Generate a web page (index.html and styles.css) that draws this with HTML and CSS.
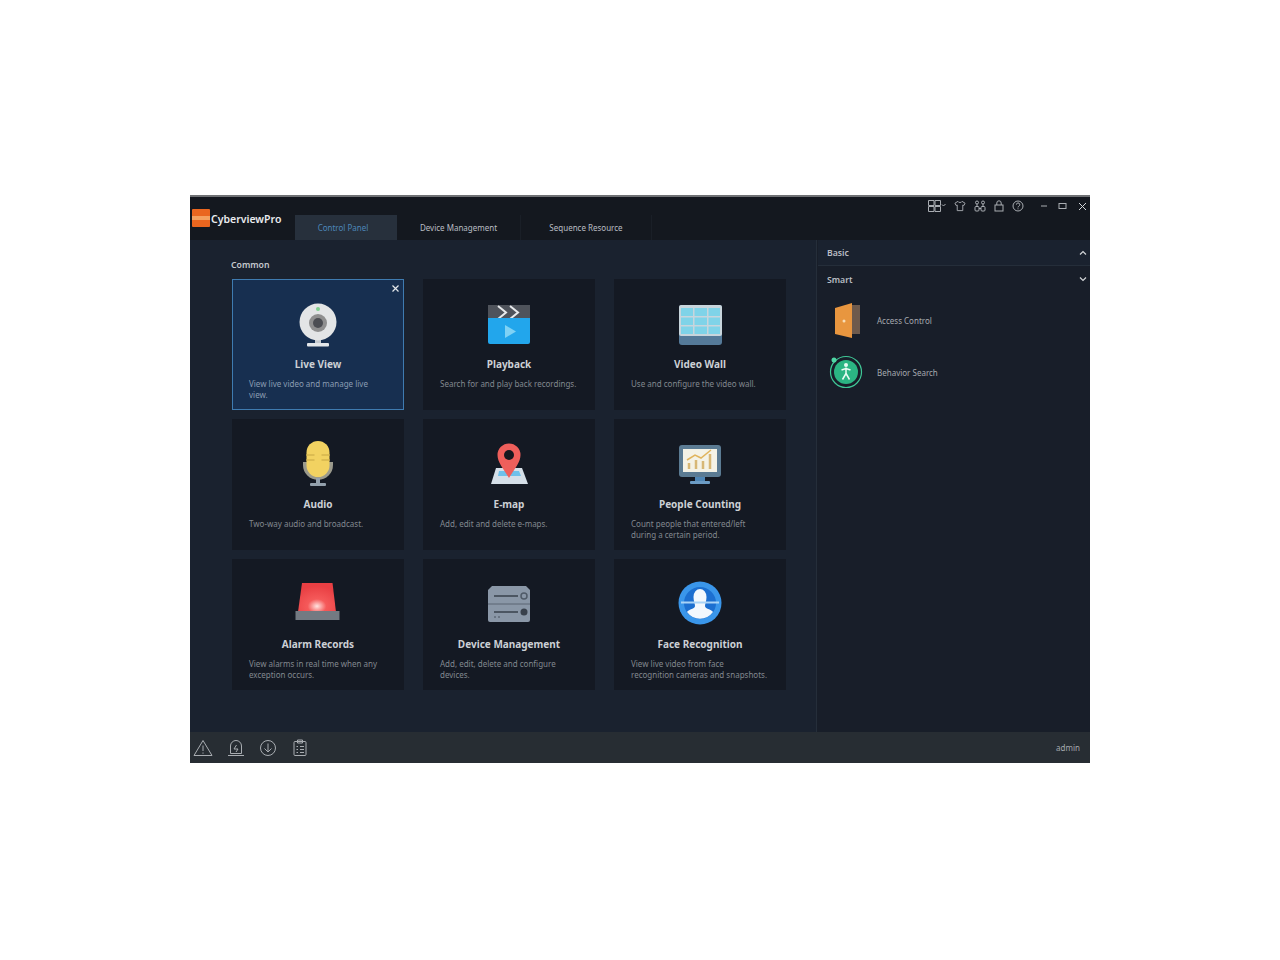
FILE: index.html
```html
<!DOCTYPE html>
<html lang="en">
<head>
    <meta charset="UTF-8">
    <title>CyberviewPro</title>
    <link rel="stylesheet" href="styles.css">
</head>
<body>
    <div class="app">
        <!-- Title bar -->
        <header class="titlebar">
            <div class="brand">
                <div class="logo"><span></span></div>
                <span class="brand-name">CyberviewPro</span>
            </div>
            <nav class="tabs">
                <div class="tab active">Control Panel</div>
                <div class="tab device">Device Management</div>
                <div class="tab sequence">Sequence Resource</div>
            </nav>
            <div class="win-tools">
                <svg width="18" height="12" viewBox="0 0 18 12"><path d="M.5.500h5.500v5H.5zM7 .5h5.500v5H7zM.5 6.500h5.500v5H.5zM7 6.500h5.500v5H7zM14 4.500l1.500 1.500L17.500 4"/></svg>
                <svg width="12" height="12" viewBox="0 0 13 12"><path d="M4.200 1L1 3l1.200 2.400L3.500 5v6h6V5l1.300.4L12 3 8.800 1c-.5 1.600-4.100 1.600-4.600 0z"/></svg>
                <svg width="12" height="12" viewBox="0 0 12 12"><circle cx="3" cy="2.500" r="1.500"/><circle cx="9" cy="2.500" r="1.500"/><rect x="1" y="6.500" width="4" height="4.500" rx="1"/><rect x="7" y="6.500" width="4" height="4.500" rx="1"/><path d="M5 8.500h2M3 4v2.500M9 4v2.500"/></svg>
                <svg width="10" height="12" viewBox="0 0 10 12"><rect x="1" y="5" width="8" height="6"/><path d="M2.800 5V3a2.200 2.200 0 0 1 4.400 0v2"/></svg>
                <svg width="12" height="12" viewBox="0 0 12 12"><circle cx="6" cy="6" r="5"/><path d="M4.400 4.600a1.700 1.700 0 1 1 2.400 1.600c-.6.300-.8.600-.8 1.200M6 8.400v.9"/></svg>
                <svg class="minimize" width="8" height="8" viewBox="0 0 8 8"><path d="M1 4h6"/></svg>
                <svg class="maximize" width="9" height="8" viewBox="0 0 9 8"><rect x="1" y="1.500" width="7" height="5"/></svg>
                <svg class="close" width="9" height="9" viewBox="0 0 9 9"><path d="M1 1l7 7M8 1L1 8"/></svg>
            </div>
        </header>

        <div class="content">
            <!-- Common modules -->
            <main class="common">
                <h2 class="section-title">Common</h2>
                <div class="cards">
                    <div class="card selected">
                        <svg class="card-close" width="7" height="7" viewBox="0 0 7 7"><path d="M.5.500l6 6M6.500.500l-6 6"/></svg>
                        <svg class="card-icon" width="48" height="48" viewBox="0 0 48 48">
                            <path d="M21 38h6v6h-6z" fill="#c5cad0"/>
                            <rect x="13" y="43" width="22" height="3.500" rx="1" fill="#e4e7ea"/>
                            <circle cx="24" cy="22" r="18.500" fill="#e3e5e6"/>
                            <circle cx="24" cy="23" r="9" fill="#8f8f8f"/>
                            <circle cx="24" cy="23" r="5" fill="#4b4d52"/>
                            <circle cx="24" cy="9" r="2" fill="#7fd08f"/>
                        </svg>
                        <h3>Live View</h3>
                        <p>View live video and manage live view.</p>
                    </div>
                    <div class="card">
                        <svg class="card-icon" width="48" height="48" viewBox="0 0 48 48">
                            <rect x="3" y="5" width="42" height="13" fill="#4f535b"/>
                            <path d="M13 6l8 6.500-8 6.500M25 6l8 6.500-8 6.500" fill="none" stroke="#e8eaec" stroke-width="2"/>
                            <path d="M3 18h42v24a2 2 0 0 1-2 2H5a2 2 0 0 1-2-2z" fill="#22a6ec"/>
                            <path d="M20 25l11 6.500-11 6.500z" fill="#7fd2f5"/>
                        </svg>
                        <h3>Playback</h3>
                        <p>Search for and play back recordings.</p>
                    </div>
                    <div class="card">
                        <svg class="card-icon" width="48" height="48" viewBox="0 0 48 48">
                            <rect x="3" y="5" width="43" height="40" rx="3" fill="#557a99"/>
                            <rect x="3" y="5" width="43" height="31" rx="2" fill="#c8d5dc"/>
                            <path d="M5 8h12v8H5zM18.500 8h12.500v8H18.500zM32.500 8H44v8H32.500zM5 17.500h12V25H5zM18.500 17.500h12.500V25H18.500zM32.500 17.500H44V25H32.500zM5 26.500h12V34H5zM18.500 26.500h12.500V34H18.500zM32.500 26.500H44V34H32.500z" fill="#7fd3e8"/>
                        </svg>
                        <h3>Video Wall</h3>
                        <p>Use and configure the video wall.</p>
                    </div>
                    <div class="card">
                        <svg class="card-icon" width="48" height="48" viewBox="0 0 48 48">
                            <path d="M9 22v3a15 15 0 0 0 30 0v-3z" fill="#9b9a8c"/>
                            <rect x="22" y="38" width="4" height="6" fill="#93a0ac"/>
                            <rect x="16" y="43" width="16" height="3" rx="1" fill="#93a0ac"/>
                            <rect x="12.500" y="1" width="23" height="36" rx="11.500" fill="#f2d261"/>
                            <path d="M12.500 14h8v2h-8zM12.500 19h8v2h-8zM27.500 14h8v2h-8zM27.500 19h8v2h-8z" fill="#dcbc52"/>
                        </svg>
                        <h3>Audio</h3>
                        <p>Two-way audio and broadcast.</p>
                    </div>
                    <div class="card">
                        <svg class="card-icon" width="48" height="48" viewBox="0 0 48 48">
                            <path d="M11 28h26l6 16H6z" fill="#d5dfe8"/>
                            <path d="M14 31h20l2 5H13z" fill="#6ec0ea"/>
                            <path d="M24 38C18 28 12.500 22 12.500 15a11.500 11.500 0 0 1 23 0c0 7-5.500 13-11.500 23z" fill="#ee5f5b"/>
                            <circle cx="24" cy="15" r="5" fill="#14181f"/>
                        </svg>
                        <h3>E-map</h3>
                        <p>Add, edit and delete e-maps.</p>
                    </div>
                    <div class="card">
                        <svg class="card-icon" width="48" height="48" viewBox="0 0 48 48">
                            <rect x="19" y="36" width="10" height="6" fill="#4f86b5"/>
                            <rect x="14" y="41" width="20" height="3" rx="1" fill="#6c9cc5"/>
                            <rect x="3" y="5" width="42" height="32" rx="3" fill="#5b7b93"/>
                            <rect x="7" y="9" width="34" height="23" fill="#f4f2e6"/>
                            <path d="M13 29v-6M20 29v-9M27 29v-8M34 29V14" stroke="#d7b775" stroke-width="2.500"/>
                            <path d="M11 20l8-5 6 3 10-8" fill="none" stroke="#e0b45c" stroke-width="1.500"/>
                        </svg>
                        <h3>People Counting</h3>
                        <p>Count people that entered/left during a certain period.</p>
                    </div>
                    <div class="card">
                        <svg class="card-icon" width="48" height="48" viewBox="0 0 48 48">
                            <defs>
                                <radialGradient id="siren" cx="0.500" cy="0.800" r="0.700">
                                    <stop offset="0" stop-color="#ffe3e0"/>
                                    <stop offset="0.350" stop-color="#f55a5a"/>
                                    <stop offset="1" stop-color="#e93f43"/>
                                </radialGradient>
                            </defs>
                            <path d="M8 3h30.500L42 32H4z" fill="url(#siren)"/>
                            <rect x="1.500" y="31" width="44" height="9" fill="#737a82"/>
                        </svg>
                        <h3>Alarm Records</h3>
                        <p>View alarms in real time when any exception occurs.</p>
                    </div>
                    <div class="card">
                        <svg class="card-icon" width="48" height="48" viewBox="0 0 48 48">
                            <path d="M7 6h34l4 4v30a2 2 0 0 1-2 2H5a2 2 0 0 1-2-2V10z" fill="#8a97a7"/>
                            <path d="M3 24h42" stroke="#5a6572" stroke-width="1"/>
                            <path d="M9 16h24M9 32h24" stroke="#39414c" stroke-width="1.500"/>
                            <circle cx="39" cy="16" r="3" fill="none" stroke="#505b68" stroke-width="1.500"/>
                            <circle cx="39" cy="32" r="3.500" fill="#39414c"/>
                            <path d="M9 37h2M13 37h2" stroke="#48525e"/>
                        </svg>
                        <h3>Device Management</h3>
                        <p>Add, edit, delete and configure devices.</p>
                    </div>
                    <div class="card">
                        <svg class="card-icon" width="48" height="48" viewBox="0 0 48 48">
                            <circle cx="24" cy="23" r="21.500" fill="#3a96ea"/>
                            <circle cx="24" cy="23" r="16" fill="#1c6fd0"/>
                            <path d="M17.500 17a6.500 8 0 0 1 13 0c0 4-1.500 7-1.500 9 0 3 6 3 8 6a16 16 0 0 1-26 0c2-3 8-3 8-6 0-2-1.500-5-1.500-9z" fill="#f3f8fd"/>
                            <path d="M5 21.500h38v2H5z" fill="#a9d3f6"/>
                        </svg>
                        <h3>Face Recognition</h3>
                        <p>View live video from face recognition cameras and snapshots.</p>
                    </div>
                </div>
            </main>

            <!-- Side panel -->
            <aside class="side">
                <div class="side-head basic">
                    <span>Basic</span>
                    <svg class="chev" width="8" height="6" viewBox="0 0 8 6"><path d="M1 4.500L4 1.500l3 3"/></svg>
                </div>
                <div class="side-head smart">
                    <span>Smart</span>
                    <svg class="chev" width="8" height="6" viewBox="0 0 8 6"><path d="M1 1.500L4 4.500l3-3"/></svg>
                </div>
                <div class="side-list">
                    <div class="side-item">
                        <svg width="34" height="36" viewBox="0 0 34 36">
                            <path d="M16 3h15v29H16z" fill="#6e5a4c"/>
                            <path d="M6 6l17-5v35L6 32z" fill="#e8963f"/>
                            <circle cx="15" cy="19" r="1.500" fill="#f8ddb5"/>
                        </svg>
                        <span>Access Control</span>
                    </div>
                    <div class="side-item">
                        <svg width="34" height="34" viewBox="0 0 34 34">
                            <circle cx="17" cy="17" r="15.500" fill="none" stroke="#3fc796" stroke-width="1.200"/>
                            <circle cx="17" cy="17" r="12" fill="#2bb583"/>
                            <circle cx="5" cy="5" r="2.500" fill="#4fd6a4"/>
                            <circle cx="17" cy="10" r="2" fill="#e9fbf4"/>
                            <path d="M17 12.500v6M12.500 15l4.500-1.500 4.500 1.500M17 18.500l-3.500 6M17 18.500l3.500 6" fill="none" stroke="#e9fbf4" stroke-width="1.500"/>
                        </svg>
                        <span>Behavior Search</span>
                    </div>
                </div>
            </aside>
        </div>

        <!-- Status bar -->
        <footer class="statusbar">
            <div class="status-icons">
                <svg width="20" height="18" viewBox="0 0 20 18"><path d="M10 1.500L19 16.500H1z"/><path d="M10 6.500v5.500M10 13.500v1.200"/></svg>
                <svg width="18" height="18" viewBox="0 0 18 18"><path d="M3.500 14.500V7a5.500 5.500 0 0 1 11 0v7.500zM1 16.500h16"/><path d="M9.500 6L7 10h4l-2 3"/></svg>
                <svg width="18" height="18" viewBox="0 0 18 18"><circle cx="9" cy="9" r="7.500"/><path d="M9 4.500v8.500M5.500 9.500L9 13l3.500-3.500"/></svg>
                <svg class="clipboard" width="16" height="18" viewBox="0 0 16 18"><rect x="2" y="2.500" width="12" height="14" rx="1"/><path d="M5.500 1h5v3h-5zM4.500 7.500h1.500M8 7.500h4M4.500 10.500h1.500M8 10.500h4M4.500 13.500h1.500M8 13.500h4"/></svg>
            </div>
            <span class="user">admin</span>
        </footer>
    </div>
</body>
</html>
```

FILE: styles.css
```css
/* Reset default styles */
* {
    margin: 0;
    padding: 0;
    box-sizing: border-box;
}

body {
    font-family: "Noto Sans", "Open Sans", sans-serif;
    background: #ffffff;
    padding: 195px 0 0 190px;
}

.app {
    display: flex;
    flex-direction: column;
    width: 900px;
    height: 568px;
    background: #1a222f;
    color: #c4c8cd;
}

/* Title bar */
.titlebar {
    display: flex;
    align-items: flex-start;
    height: 45px;
    background: #14181f;
    border-top: 2px solid #6f7174;
}

.brand {
    display: flex;
    align-items: center;
    gap: 1px;
    width: 103px;
    margin: 12px 0 0 2px;
}

.logo {
    display: flex;
    align-items: center;
    width: 18px;
    height: 18px;
    border-radius: 1px;
    background: #ea661f;
}

.logo span {
    display: block;
    width: 100%;
    height: 4px;
    background: #f5a15f;
}

.brand-name {
    font-size: 10.500px;
    font-weight: 600;
    padding-top: 2px;
    color: #e9ebee;
}

.tabs {
    display: flex;
    margin-top: 18px;
}

.tab {
    display: flex;
    align-items: center;
    justify-content: center;
    height: 25px;
    font-size: 8px;
    color: #b9bdc3;
}

.tab.active {
    width: 102px;
    padding-right: 6px;
    background: #27303c;
    color: #4c86b9;
}

.tab.device {
    width: 124px;
    border-right: 1px solid #1a1f27;
}

.tab.sequence {
    width: 131px;
    border-right: 1px solid #1a1f27;
}

.win-tools {
    display: flex;
    align-items: center;
    gap: 8px;
    margin: 3px 3px 0 auto;
}

.win-tools svg {
    fill: none;
    stroke: #a9adb2;
    stroke-width: 1;
}

.win-tools .minimize {
    margin-left: 8px;
}

.win-tools .maximize {
    margin-left: 2px;
}

.win-tools .close {
    margin-left: 3px;
    stroke: #d3d6d9;
}

/* Main area */
.content {
    flex: 1;
    display: flex;
    min-height: 0;
}

.common {
    width: 627px;
    padding: 19px 0 0 41px;
    border-right: 1px solid #252e3a;
}

.section-title {
    font-size: 8.700px;
    font-weight: 600;
    line-height: 12px;
    color: #c4c8cd;
    margin-bottom: 8px;
}

.cards {
    display: grid;
    grid-template-columns: repeat(3, 172px);
    grid-auto-rows: 131px;
    gap: 9px 19px;
    margin-left: 1px;
}

.card {
    position: relative;
    display: flex;
    flex-direction: column;
    align-items: center;
    padding: 21px 17px 0;
    background: #141923;
}

.card.selected {
    background: #172f50;
    border: 1px solid #3f7bb0;
    padding: 20px 16px 0;
}

.card-close {
    position: absolute;
    top: 5px;
    right: 4px;
    fill: none;
    stroke: #e4e7ea;
    stroke-width: 1.2;
}

.card-icon {
    flex: none;
}

.card h3 {
    font-size: 10px;
    font-weight: 700;
    line-height: 14px;
    margin-top: 9px;
    color: #ccd0d5;
}

.card p {
    align-self: flex-start;
    max-width: 137px;
    font-size: 8px;
    line-height: 10.500px;
    margin-top: 8px;
    color: #82888f;
}

.card.selected p {
    color: #8a9cb2;
}

/* Side panel */
.side {
    flex: 1;
    background: #181e29;
    padding-left: 1px;
}

.side-head {
    display: flex;
    align-items: center;
    justify-content: space-between;
    height: 26px;
    padding: 0 3px 0 9px;
    font-size: 8.700px;
    font-weight: 600;
    color: #b9bdc3;
}

.side-head.basic {
    background: #1a222f;
    border-bottom: 1px solid #252e3a;
}

.side-head.smart span {
    margin-top: 2px;
}

.chev {
    fill: none;
    stroke: #d3d6d9;
    stroke-width: 1.200;
}

.side-list {
    padding-top: 2px;
}

.side-item {
    display: flex;
    align-items: center;
    gap: 14px;
    height: 52px;
    padding-left: 11px;
    font-size: 8px;
    color: #a5a9af;
}

/* Status bar */
.statusbar {
    display: flex;
    align-items: center;
    justify-content: space-between;
    height: 31px;
    flex: none;
    background: #272d33;
    padding: 0 10px 0 3px;
}

.status-icons {
    display: flex;
    align-items: center;
    gap: 14px;
}

.status-icons svg {
    fill: none;
    stroke: #a9adb2;
    stroke-width: 1;
}

.status-icons .clipboard {
    margin-left: 1px;
}

.user {
    font-size: 8px;
    color: #a5a9af;
}
```
